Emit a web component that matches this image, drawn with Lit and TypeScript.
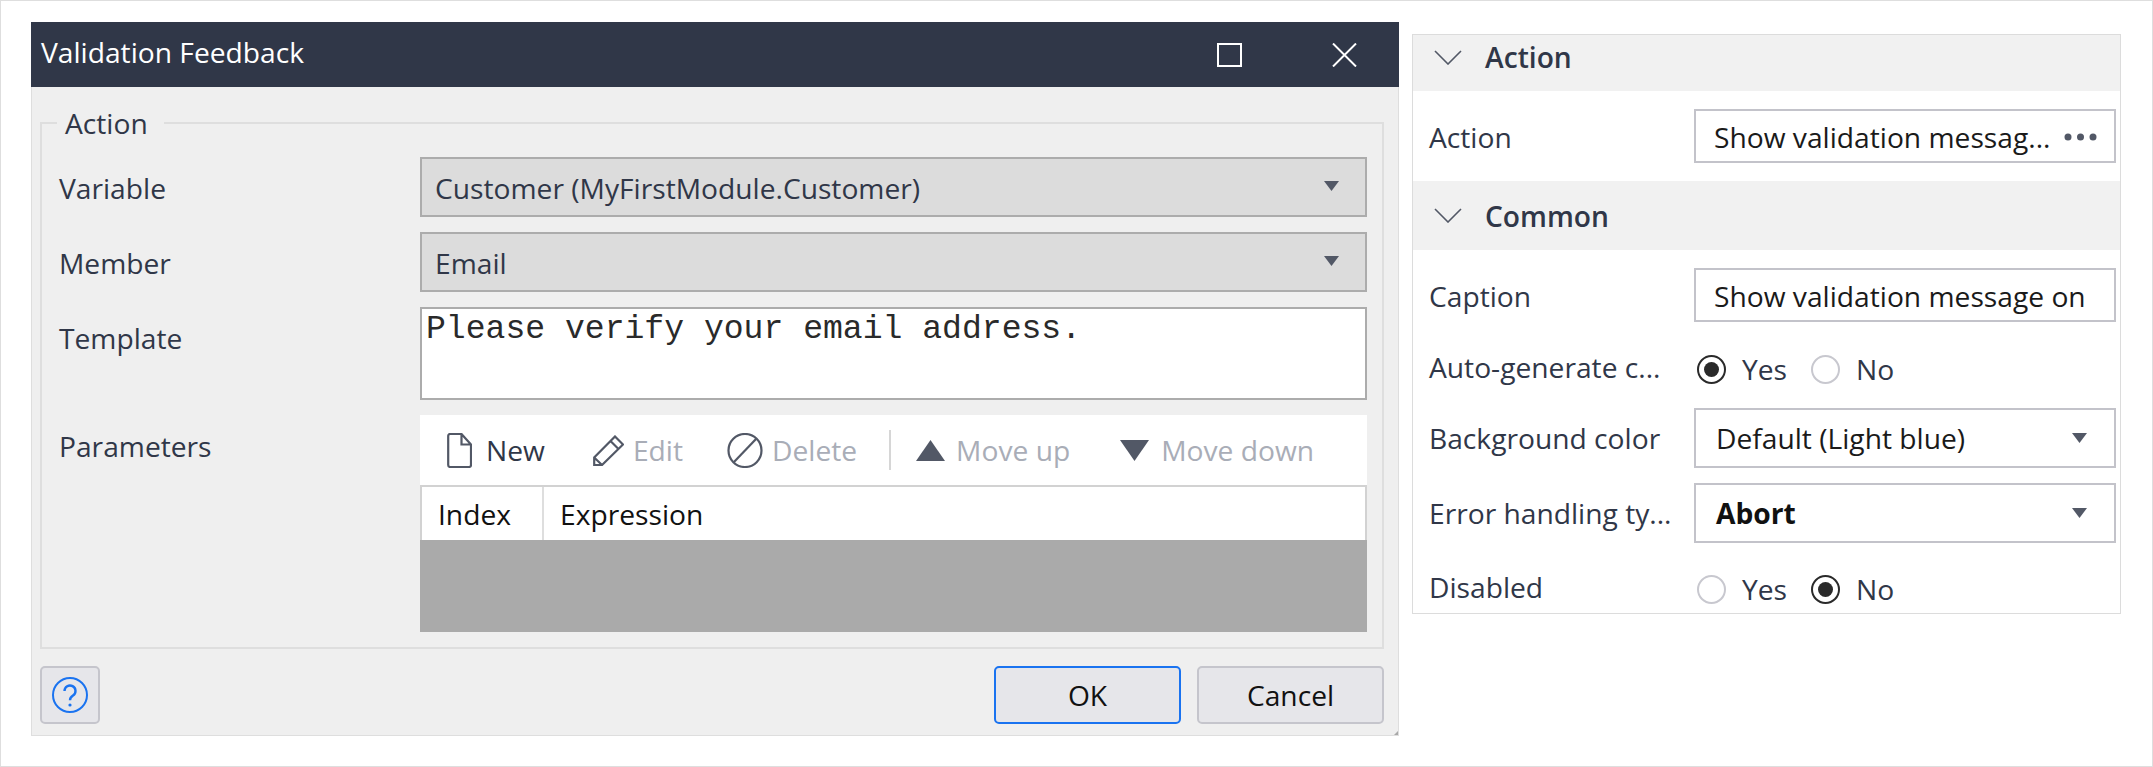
import {LitElement, html, css, svg} from 'lit';
import {customElement} from 'lit/decorators.js';

const arrow = html`<svg class="arrow" width="15" height="10" viewBox="0 0 15 10"><polygon points="0,0 15,0 7.5,10" /></svg>`;

const chevron = html`<svg class="chev" width="28" height="15" viewBox="0 0 28 15"><polyline points="1,1 14,14 27,1" /></svg>`;

const icons = {
  file: svg`<path d="M1.2 3a2 2 0 0 1 2-2H14.5L24 11.5V32a2 2 0 0 1-2 2H3.2a2 2 0 0 1-2-2Z M14.5 1V11.5H24" />`,
  pencil: svg`<path d="M1.2 30V22.5L22 1.5L30 9.5L9 30Z M17.5 6L25.5 14 M1.2 22.5L9 30" />`,
  ban: svg`<circle cx="18" cy="17.5" r="16.5" /><line x1="7" y1="29" x2="29" y2="6" />`,
};

@customElement('app-root')
export class AppRoot extends LitElement {
  static styles = css`
    :host {
      display: block;
      font-family: 'Open Sans', 'Noto Sans', sans-serif;
      font-size: 28.2px;
      color: #303748;
    }
    * {
      box-sizing: border-box;
    }
    .page {
      width: 2153px;
      height: 767px;
      background: #fff;
      border: 1px solid #dedede;
      padding: 21px 0 0 30px;
      display: flex;
      align-items: flex-start;
      gap: 13px;
    }

    /* dialog */
    .dialog {
      position: relative;
      width: 1368px;
      height: 714px;
      background: #efefef;
      border: 1px solid #dedede;
      border-top: none;
      display: flex;
      flex-direction: column;
    }
    .title {
      height: 65px;
      margin: 0 -1px;
      padding: 0 42px 0 10px;
      background: #303748;
      color: #fff;
      display: flex;
      align-items: center;
      gap: 90px;
      flex-shrink: 0;
    }
    .title span {
      flex: 1;
      padding-bottom: 5px;
    }
    .title svg {
      stroke: #fff;
      stroke-width: 2;
      fill: none;
    }
    .content {
      flex: 1;
      padding: 16px 14px 11px 8px;
      display: flex;
      flex-direction: column;
    }
    fieldset {
      margin: 0;
      padding: 14px 15px 15px 17px;
      border: 2px solid #dedede;
      display: grid;
      grid-template-columns: 361px 947px;
      row-gap: 15px;
    }
    legend {
      margin-left: -2px;
      padding: 0 16px 0 8px;
      line-height: 40px;
      height: 40px;
    }
    .label {
      line-height: 62px;
      height: 60px;
    }
    .select {
      height: 60px;
      padding: 2px 26px 0 13px;
      border: 2px solid #acacac;
      background: #dcdcdc;
      display: flex;
      align-items: center;
      justify-content: space-between;
    }
    .select .arrow {
      margin-top: -4px;
    }
    .arrow {
      fill: #525866;
      flex-shrink: 0;
    }
    .template {
      height: 93px;
      padding: 2px 0 0 4px;
      border: 2px solid #acacac;
      background: #fff;
      font-family: 'Liberation Mono', monospace;
      font-size: 33.1px;
      line-height: 36px;
      color: #2a2a2a;
    }
    .params {
      height: 217px;
      display: flex;
      flex-direction: column;
    }
    .toolbar {
      height: 70px;
      padding-left: 27px;
      background: #fff;
      display: flex;
      align-items: center;
      flex-shrink: 0;
    }
    .tool {
      display: flex;
      align-items: center;
    }
    .tool svg {
      fill: none;
      stroke: #525866;
      stroke-width: 2.2;
      flex-shrink: 0;
    }
    .tool svg.solid {
      fill: #525866;
      stroke: none;
    }
    .tool.off {
      color: #a9adb7;
    }
    .sep {
      width: 2px;
      height: 40px;
      margin-left: 32px;
      background: #d6d6d6;
    }
    .table-head {
      height: 55px;
      background: #fff;
      border: 2px solid #d2d2d2;
      border-bottom: none;
      display: grid;
      grid-template-columns: 122px 1fr;
      color: #111;
      line-height: 54px;
      flex-shrink: 0;
    }
    .table-head div:first-child {
      padding-left: 16px;
      border-right: 2px solid #dedede;
    }
    .table-head div:last-child {
      padding-left: 16px;
    }
    .table-body {
      flex: 1;
      background: #aaa;
    }
    .footer {
      margin-top: 17px;
      display: flex;
      gap: 16px;
    }
    .btn {
      height: 58px;
      width: 187px;
      border: 2px solid #c5c5cc;
      border-radius: 5px;
      background: #e6e6ea;
      color: #111;
      display: flex;
      align-items: center;
      justify-content: center;
    }
    .btn.help {
      width: 60px;
      margin-right: auto;
    }
    .btn.primary {
      border-color: #1a73f0;
    }
    .grip {
      position: absolute;
      right: 0;
      bottom: 0;
      width: 0;
      height: 0;
      border-left: 4px solid transparent;
      border-bottom: 4px solid #a8a8a8;
    }

    /* properties panel */
    .panel {
      width: 709px;
      margin-top: 12px;
      height: 580px;
      border: 1px solid #dcdcdc;
      display: flex;
      flex-direction: column;
    }
    .head {
      background: #f1f1f1;
      display: flex;
      align-items: center;
      gap: 23px;
      padding-left: 21px;
      font-weight: 600;
      flex-shrink: 0;
    }
    .head.first {
      height: 56px;
      padding-bottom: 12px;
    }
    .head.second {
      height: 69px;
      margin-top: 18px;
    }
    .chev {
      fill: none;
      stroke: #525866;
      stroke-width: 1.6;
    }
    .row {
      display: grid;
      grid-template-columns: 281px 422px;
      align-items: center;
      flex-shrink: 0;
    }
    .row .name {
      padding-left: 16px;
    }
    .row.short .name {
      padding-top: 2px;
    }
    .row.check {
      height: 30px;
      line-height: 30px;
      grid-template-rows: 30px;
    }
    .row.check .name {
      margin-top: -5px;
    }
    .input {
      height: 54px;
      padding: 2px 17px 0 18px;
      border: 2px solid #c3c3ca;
      background: #fff;
      color: #1a1a1a;
      display: flex;
      align-items: center;
      justify-content: space-between;
      white-space: nowrap;
      overflow: hidden;
    }
    .input.tall {
      height: 60px;
      padding: 0 27px 0 20px;
    }
    .input b {
      font-weight: 700;
      color: #111;
    }
    .dots {
      fill: #525866;
      flex-shrink: 0;
    }
    .radios {
      display: flex;
      align-items: center;
      padding-left: 3px;
    }
    .radio {
      display: flex;
      align-items: center;
      gap: 16px;
      width: 114px;
    }
    .radio svg {
      fill: none;
      stroke: #c8c8cf;
      stroke-width: 2;
    }
    .radio.on svg {
      stroke: #2a2a2a;
    }
    .radio circle.dot {
      fill: #2a2a2a;
      stroke: none;
    }
  `;

  renderTool(icon: unknown, label: string, off: boolean, iconGap: number, left: number) {
    return html`<div class="tool ${off ? 'off' : ''}" style="margin-left:${left}px;gap:${iconGap}px">
      ${icon}<span>${label}</span>
    </div>`;
  }

  renderRadio(label: string, on: boolean) {
    return html`<div class="radio ${on ? 'on' : ''}">
      <svg width="29" height="29" viewBox="0 0 29 29">
        <circle cx="14.5" cy="14.5" r="13.5" />
        ${on ? svg`<circle class="dot" cx="14.5" cy="14.5" r="7.5" />` : ''}
      </svg>
      <span>${label}</span>
    </div>`;
  }

  renderDialog() {
    return html`
      <div class="dialog">
        <div class="title">
          <span>Validation Feedback</span>
          <svg width="25" height="24" viewBox="0 0 25 24"><rect x="1" y="1" width="23" height="22" /></svg>
          <svg width="25" height="24" viewBox="0 0 25 24"><path d="M1 0.5L24 23.5M24 0.5L1 23.5" /></svg>
        </div>
        <div class="content">
          <fieldset>
            <legend>Action</legend>
            <div class="label">Variable</div>
            <div class="select"><span>Customer (MyFirstModule.Customer)</span>${arrow}</div>
            <div class="label">Member</div>
            <div class="select"><span>Email</span>${arrow}</div>
            <div class="label">Template</div>
            <div class="template">Please verify your email address.</div>
            <div class="label">Parameters</div>
            <div class="params">
              <div class="toolbar">
                ${this.renderTool(html`<svg width="25" height="35" viewBox="0 0 25 35">${icons.file}</svg>`, 'New', false, 14, 0)}
                ${this.renderTool(html`<svg width="31" height="31" viewBox="0 0 31 31">${icons.pencil}</svg>`, 'Edit', true, 9, 48)}
                ${this.renderTool(html`<svg width="36" height="35" viewBox="0 0 36 35">${icons.ban}</svg>`, 'Delete', true, 9, 44)}
                <div class="sep"></div>
                ${this.renderTool(html`<svg class="solid" width="29" height="21" viewBox="0 0 29 21"><polygon points="0,21 14.5,0 29,21" /></svg>`, 'Move up', true, 11, 25)}
                ${this.renderTool(html`<svg class="solid" width="29" height="21" viewBox="0 0 29 21"><polygon points="0,0 29,0 14.5,21" /></svg>`, 'Move down', true, 12, 50)}
              </div>
              <div class="table-head"><div>Index</div><div>Expression</div></div>
              <div class="table-body"></div>
            </div>
          </fieldset>
          <div class="footer">
            <div class="btn help">
              <svg width="36" height="36" viewBox="0 0 36 36" fill="none" stroke="#1a73f0" stroke-width="2">
                <circle cx="18" cy="18" r="17" />
                <path d="M12.5 14a5.5 5.5 0 1 1 8.5 4.6c-2 1.3-3 2.3-3 4.6" stroke-width="2.4" />
                <circle cx="18" cy="28" r="1.6" fill="#1a73f0" stroke="none" />
              </svg>
            </div>
            <div class="btn primary">OK</div>
            <div class="btn">Cancel</div>
          </div>
        </div>
        <div class="grip"></div>
      </div>
    `;
  }

  renderPanel() {
    return html`
      <div class="panel">
        <div class="head first">${chevron}<span>Action</span></div>
        <div class="row short" style="margin-top:18px">
          <div class="name">Action</div>
          <div class="input">
            <span>Show validation messag...</span>
            <svg class="dots" width="33" height="8" viewBox="0 0 33 8">
              <circle cx="4" cy="4" r="3.5" /><circle cx="16.5" cy="4" r="3.5" /><circle cx="29" cy="4" r="3.5" />
            </svg>
          </div>
        </div>
        <div class="head second">${chevron}<span>Common</span></div>
        <div class="row short" style="margin-top:18px">
          <div class="name">Caption</div>
          <div class="input"><span>Show validation message on</span></div>
        </div>
        <div class="row check" style="margin-top:32px">
          <div class="name">Auto-generate c...</div>
          <div class="radios">${this.renderRadio('Yes', true)}${this.renderRadio('No', false)}</div>
        </div>
        <div class="row" style="margin-top:24px">
          <div class="name">Background color</div>
          <div class="input tall"><span>Default (Light blue)</span>${arrow}</div>
        </div>
        <div class="row" style="margin-top:15px">
          <div class="name">Error handling ty...</div>
          <div class="input tall"><b>Abort</b>${arrow}</div>
        </div>
        <div class="row check" style="margin-top:31px">
          <div class="name">Disabled</div>
          <div class="radios">${this.renderRadio('Yes', false)}${this.renderRadio('No', true)}</div>
        </div>
      </div>
    `;
  }

  render() {
    return html`<div class="page">${this.renderDialog()}${this.renderPanel()}</div>`;
  }
}
